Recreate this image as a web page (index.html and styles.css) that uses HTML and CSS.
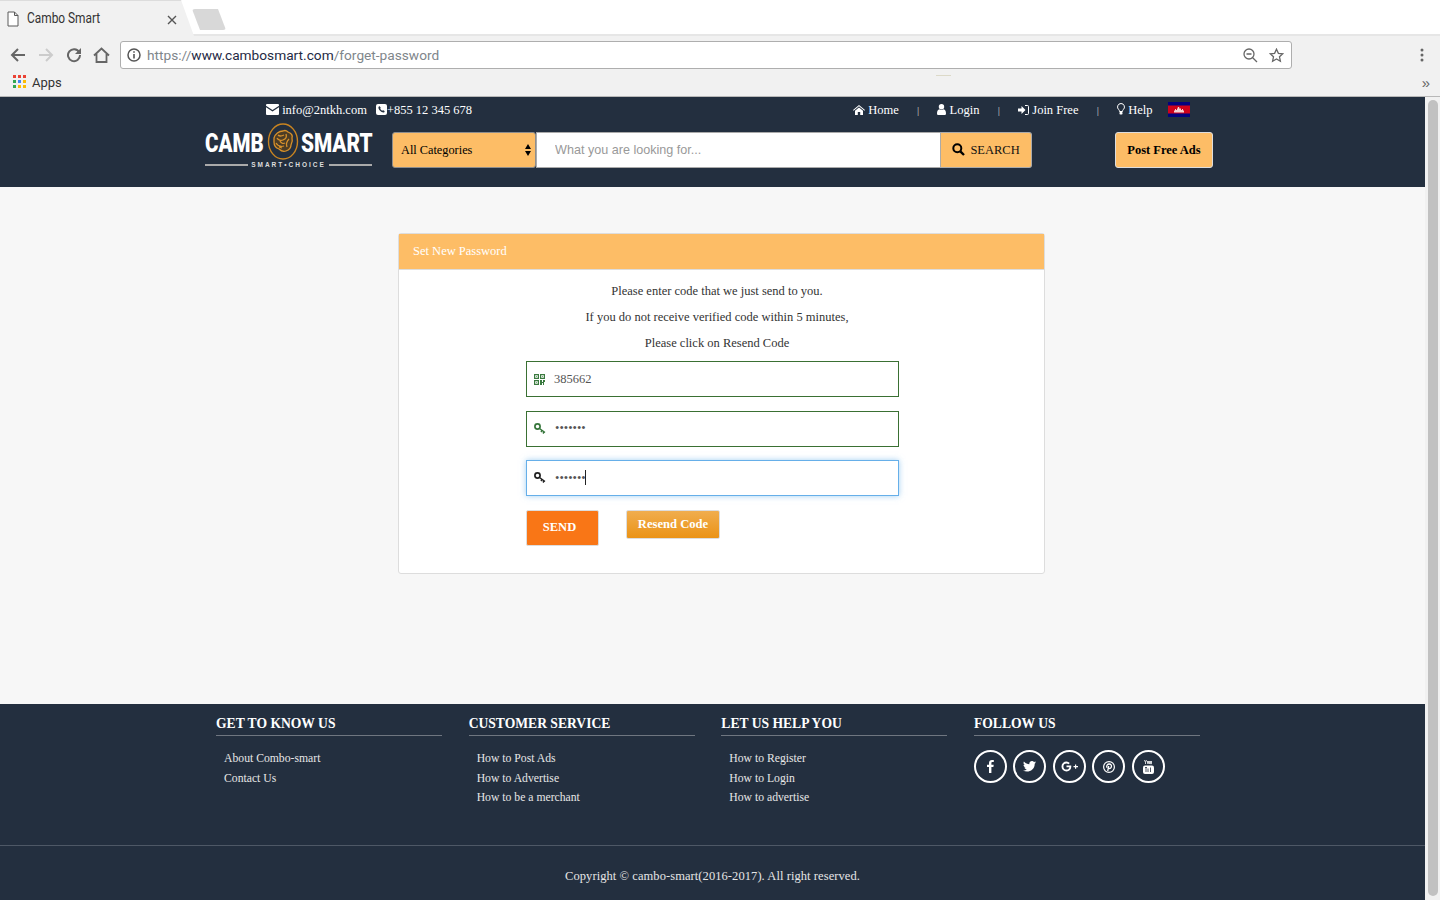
FILE: index.html
```html
<!DOCTYPE html>
<html>
<head>
<title>Cambo Smart</title>
<link rel="stylesheet" href="styles.css">
</head>
<body>

<div class="chrome">
  <div class="tabstrip">
    <div class="tab">
      <svg class="tab-doc" width="12" height="16" viewBox="0 0 12 16"><path d="M1 1h6.500L11 4.500V15H1z M7.500 1v3.500H11" fill="#fff" stroke="#5a5a5a"/></svg>
      <span class="tab-title">Cambo Smart</span>
      <svg class="tab-x" width="10" height="10" viewBox="0 0 10 10"><path d="M1 1l8 8M9 1l-8 8" stroke="#555" stroke-width="1.400"/></svg>
    </div>
    <div class="newtab"></div>
  </div>
  <div class="toolbar">
    <svg class="tool-back" width="16" height="16" viewBox="0 0 16 16"><path d="M15 8H2M8 2L2 8l6 6" fill="none" stroke="#666" stroke-width="2"/></svg>
    <svg class="tool-fwd" width="16" height="16" viewBox="0 0 16 16"><path d="M1 8h13M8 2l6 6-6 6" fill="none" stroke="#ccc" stroke-width="2"/></svg>
    <svg class="tool-reload" width="16" height="16" viewBox="0 0 16 16"><path d="M13.200 5.200A6 6 0 1 0 14 8" fill="none" stroke="#666" stroke-width="2"/><path d="M15 1v6H9z" fill="#666"/></svg>
    <svg class="tool-home" width="17" height="16" viewBox="0 0 17 16"><path d="M1 8.500L8.500 1.500 16 8.500M3.500 7v8h10V7" fill="none" stroke="#666" stroke-width="1.800"/></svg>
    <div class="omnibox">
      <svg width="14" height="14" viewBox="0 0 14 14"><circle cx="7" cy="7" r="6" fill="none" stroke="#555" stroke-width="1.500"/><path d="M7 6v4.500M7 3.300v1.500" stroke="#555" stroke-width="1.600"/></svg>
      <span class="url"><span class="url-dim">https://</span>www.cambosmart.com<span class="url-dim">/forget-password</span></span>
      <svg class="omni-zoom" width="15" height="15" viewBox="0 0 15 15"><circle cx="6" cy="6" r="5" fill="none" stroke="#666" stroke-width="1.300"/><path d="M3.500 6h5M9.700 9.700L14 14" stroke="#666" stroke-width="1.300"/></svg>
      <svg width="15" height="15" viewBox="0 0 15 15"><path d="M7.500 1.200l1.900 4.100 4.400.5-3.300 3 .9 4.400-3.900-2.200-3.900 2.200.9-4.400-3.300-3 4.400-.5z" fill="none" stroke="#666" stroke-width="1.300"/></svg>
    </div>
    <svg class="tool-menu" width="4" height="14" viewBox="0 0 4 14"><circle cx="2" cy="2" r="1.500" fill="#666"/><circle cx="2" cy="7" r="1.500" fill="#666"/><circle cx="2" cy="12" r="1.500" fill="#666"/></svg>
  </div>
  <div class="bookmarks">
    <svg width="14" height="14" viewBox="0 0 14 14">
      <rect width="3" height="3" fill="#ea4335"/><rect x="5" width="3" height="3" fill="#ea4335"/><rect x="10" width="3" height="3" fill="#ea4335"/>
      <rect y="5" width="3" height="3" fill="#34a853"/><rect x="5" y="5" width="3" height="3" fill="#4285f4"/><rect x="10" y="5" width="3" height="3" fill="#fbbc05"/>
      <rect y="10" width="3" height="3" fill="#34a853"/><rect x="5" y="10" width="3" height="3" fill="#fbbc05"/><rect x="10" y="10" width="3" height="3" fill="#fbbc05"/>
    </svg>
    <span class="apps">Apps</span>
    <span class="more">»</span>
    <span class="grip"></span>
  </div>
</div>

<div class="viewport">
  <div class="page">
    <header class="site-header">
      <div class="topbar">
        <div class="contact">
          <span class="top-item">
            <svg class="ico" width="13" height="11" viewBox="0 0 13 11"><path d="M1 0h11a1 1 0 0 1 1 1v.8L6.500 6 0 1.800V1a1 1 0 0 1 1-1zM0 3.300l6.500 4.200L13 3.300V10a1 1 0 0 1-1 1H1a1 1 0 0 1-1-1z" fill="#fff"/></svg>
            info@2ntkh.com
          </span>
          <span class="top-item phone">
            <svg class="ico" width="11" height="11" viewBox="0 0 11 11"><rect width="11" height="11" rx="2" fill="#fff"/><path d="M2.500 3c.3-.7 1-.9 1.400-.6l.8 1.300c.1.300-.4.800-.5 1.100.3.800 1 1.500 1.900 1.900.3-.2.700-.7 1.100-.5l1.300.8c.3.400 0 1.200-.6 1.400C5.500 8.800 1.800 5.500 2.500 3z" fill="#232f3f"/></svg>+855 12 345 678
          </span>
        </div>
        <nav class="topnav">
          <a class="nav-link nav-home">
            <svg class="ico" width="12" height="10" viewBox="0 0 12 10"><path d="M6 0l6 5-.6.700L6 1.300.6 5.700 0 5zM2 5.800L6 2.500l4 3.300V10H7.200V7H4.800v3H2z" fill="#fff"/></svg>
            Home
          </a>
          <span class="sep">|</span>
          <a class="nav-link nav-login">
            <svg class="ico" width="9" height="11" viewBox="0 0 9 11"><circle cx="4.500" cy="2.700" r="2.700" fill="#fff"/><path d="M0 9.500C0 7 1 5.500 2.300 5.200c1.300.9 3.100.9 4.400 0C8 5.500 9 7 9 9.500 9 10.500 8.300 11 7.500 11h-6C.7 11 0 10.500 0 9.500z" fill="#fff"/></svg>
            Login
          </a>
          <span class="sep">|</span>
          <a class="nav-link nav-join">
            <svg class="ico" width="11" height="10" viewBox="0 0 11 10"><path d="M0 3.500h3.500V1L7.500 5l-4 4V6.500H0z" fill="#fff"/><path d="M7 .500h2.500a1 1 0 0 1 1 1v7a1 1 0 0 1-1 1H7" fill="none" stroke="#fff"/></svg>
            Join Free
          </a>
          <span class="sep">|</span>
          <a class="nav-link nav-help">
            <svg class="ico" width="8" height="12" viewBox="0 0 8 12"><path d="M4 .500a3.500 3.500 0 0 1 2.200 6.200c-.5.500-.7 1-.7 1.800h-3c0-.8-.2-1.300-.7-1.800A3.500 3.500 0 0 1 4 .500z" fill="none" stroke="#fff"/><rect x="2.500" y="9" width="3" height="2.500" rx=".8" fill="#fff"/></svg>
            Help
          </a>
          <svg class="flag" width="22" height="15" viewBox="0 0 22 15"><rect width="22" height="15" fill="#03037f"/><rect y="3.500" width="22" height="8" fill="#d0021b"/><path d="M6 10.500V9l1-1V7h1v1h1V6.500h.800V5h1.400v1.500H13V8h1V7h1v1l1 1v1.500z" fill="#f4d5d5"/></svg>
        </nav>
      </div>
      <div class="searchbar">
        <a class="logo">
          <div class="logo-main">
            <span class="logo-word logo-camb">CAMB</span>
            <svg class="logo-mark" width="32" height="37" viewBox="0 0 32 37">
              <ellipse cx="16" cy="18.500" rx="14.500" ry="17.500" fill="none" stroke="#c98420" stroke-width="1.400"/>
              <path d="M7 15c1-4 5-7 9-7 2-1 4 0 5 1 3 1 5 3 4 6 1 3 0 5-1 7 0 3-2 5-5 6-3 1-5 0-7-2-3-1-5-4-5-7zM11 12c2 2 4 1 6 0M19 11c1 3 0 5-3 6-2 1-5 0-6-2M22 16c-2 2-3 5-2 8M9 20c2 3 5 4 8 3M13 18c1 2 3 3 5 2M15 25l-3-1" fill="#4d3d25" stroke="#d8912a" stroke-width="1.300"/>
            </svg>
            <span class="logo-word logo-smart">SMART</span>
          </div>
          <div class="logo-tag"><i></i><span>SMART•CHOICE</span><i></i></div>
        </a>
        <form class="search">
          <div class="select-wrap">
            <select class="category"><option>All Categories</option></select>
            <svg class="select-arrows" width="6" height="12" viewBox="0 0 6 12"><path d="M3 0l3 5H0zM3 12L0 7h6z" fill="#000"/></svg>
          </div>
          <input class="search-input" type="text" placeholder="What you are looking for...">
          <button class="search-btn" type="button">
            <svg width="13" height="13" viewBox="0 0 13 13"><circle cx="5.300" cy="5.300" r="4" fill="none" stroke="#000" stroke-width="2"/><path d="M8.300 8.300L12 12" stroke="#000" stroke-width="2.400"/></svg>
            SEARCH
          </button>
        </form>
        <a class="post-btn">Post Free Ads</a>
      </div>
    </header>

    <main class="content">
      <div class="panel">
        <div class="panel-heading">Set New Password</div>
        <div class="panel-body">
          <p class="note">Please enter code that we just send to you.</p>
          <p class="note">If you do not receive verified code within 5 minutes,</p>
          <p class="note">Please click on Resend Code</p>
          <div class="field valid">
            <svg class="field-ico" width="11" height="11" viewBox="0 0 11 11"><path d="M0 0h5v5H0zM1.200 1.200v2.600h2.600V1.200zM6 0h5v5H6zM7.200 1.200v2.600h2.600V1.200zM0 6h5v5H0zM1.200 7.200v2.600h2.600V7.200zM6 6h2v2h1V6h2v2h-1v3H9V9H8v2H6z" fill="#3a7a3f" fill-rule="evenodd"/><path d="M2 2h1v1H2zM8 2h1v1H8zM2 8h1v1H2z" fill="#7fae82"/></svg>
            <input type="text" value="385662">
          </div>
          <div class="field valid">
            <svg class="field-ico" width="12" height="12" viewBox="0 0 12 12"><circle cx="3.500" cy="3.500" r="2.600" fill="none" stroke="#37763c" stroke-width="1.700"/><path d="M5.500 5.500L11 9.500M8 7.500l-1 1.500M10 9l-1 1.500" fill="none" stroke="#37763c" stroke-width="1.500"/></svg>
            <input type="password" value="1234567">
          </div>
          <div class="field focus">
            <svg class="field-ico" width="12" height="12" viewBox="0 0 12 12"><circle cx="3.500" cy="3.500" r="2.600" fill="none" stroke="#222" stroke-width="1.700"/><path d="M5.500 5.500L11 9.500M8 7.500l-1 1.500M10 9l-1 1.500" fill="none" stroke="#222" stroke-width="1.500"/></svg>
            <input type="password" value="1234567">
            <span class="caret"></span>
          </div>
          <div class="actions">
            <button class="send-btn" type="button">SEND</button>
            <button class="resend-btn" type="button">Resend Code</button>
          </div>
        </div>
      </div>
    </main>

    <footer class="site-footer">
      <div class="footer-cols">
        <div class="footer-col">
          <h4>GET TO KNOW US</h4>
          <ul>
            <li>About Combo-smart</li>
            <li>Contact Us</li>
          </ul>
        </div>
        <div class="footer-col">
          <h4>CUSTOMER SERVICE</h4>
          <ul>
            <li>How to Post Ads</li>
            <li>How to Advertise</li>
            <li>How to be a merchant</li>
          </ul>
        </div>
        <div class="footer-col">
          <h4>LET US HELP YOU</h4>
          <ul>
            <li>How to Register</li>
            <li>How to Login</li>
            <li>How to advertise</li>
          </ul>
        </div>
        <div class="footer-col">
          <h4>FOLLOW US</h4>
          <div class="social">
            <a class="social-btn"><svg width="7" height="13" viewBox="0 0 7 13"><path d="M2 13V7H0V4.700h2V3c0-2 1.200-3 3-3 .8 0 1.500.1 1.800.1v2H5.600C4.600 2.100 4.400 2.600 4.400 3.300v1.400h2.300L6.400 7h-2v6z" fill="#fff"/></svg></a>
            <a class="social-btn"><svg width="13" height="11" viewBox="0 0 13 11"><path d="M13 1.300c-.5.200-1 .4-1.500.4.600-.3 1-.8 1.200-1.500-.5.300-1.100.5-1.700.7A2.700 2.700 0 0 0 6.400 3.300C4.200 3.200 2.200 2.100.9.500.2 1.700.6 3.300 1.700 4c-.4 0-.8-.1-1.200-.3 0 1.300.9 2.400 2.100 2.700-.4.100-.8.100-1.200 0 .3 1.100 1.300 1.800 2.500 1.900C2.800 9.200 1.400 9.700 0 9.500 4.500 12.300 12 9.800 11.700 2.700c.5-.4 1-.9 1.300-1.400z" fill="#fff"/></svg></a>
            <a class="social-btn gplus"><svg width="17" height="11" viewBox="0 0 17 11"><path d="M5.500 4.600v1.700h2.900C8.100 7.700 7 8.600 5.500 8.600a3.100 3.100 0 0 1 0-6.200c.8 0 1.500.3 2 .8l1.300-1.300A5 5 0 0 0 5.500.5a5 5 0 0 0 0 10c2.900 0 4.800-2 4.800-4.900 0-.3 0-.7-.1-1z" fill="#fff"/><path d="M14 3.500v1.500h-1.500V6.200H14v1.500h1.200V6.200H17V5h-1.800V3.500z" fill="#fff"/></svg></a>
            <a class="social-btn"><svg width="12" height="12" viewBox="0 0 12 12"><circle cx="6" cy="6" r="5.400" fill="none" stroke="#fff" stroke-width="1.200"/><path d="M4.700 10l1-5M4 6.700C3 4.700 4.500 3 6.200 3c1.700 0 2.500 1.200 2.200 2.700-.3 1.500-1.500 2.300-2.600 1.500" fill="none" stroke="#fff" stroke-width="1.300"/></svg></a>
            <a class="social-btn"><svg width="11" height="14" viewBox="0 0 11 14"><path d="M1.500 0l1 2.500L3.500 0M2.500 2.500V4M4.500 1v2.500h1V1M6.500 1v3M7.500 1v2.800h1V1" fill="none" stroke="#fff" stroke-width=".8"/><rect y="5.500" width="11" height="8.500" rx="2" fill="#fff"/><path d="M2 7.500h2M3 7.500V12M5 8.500v3.500M7.500 7.500V12" stroke="#232f3f" stroke-width=".8"/></svg></a>
          </div>
        </div>
      </div>
      <div class="copyright">Copyright © cambo-smart(2016-2017). All right reserved.</div>
    </footer>
  </div>
  <div class="scrollbar"><div class="thumb"></div></div>
</div>

</body>
</html>
```

FILE: styles.css
```css
* {
  box-sizing: border-box;
}
html,
body {
  margin: 0;
  height: 100%;
  overflow: hidden;
}
body {
  font-family: "Liberation Serif", serif;
  font-size: 12.500px;
  background: #fff;
}

/* browser chrome */
.chrome {
  height: 97px;
  background: #f1f1f1;
  border-bottom: 1px solid #b8b8b8;
  font-family: "Liberation Sans", sans-serif;
}
.tabstrip {
  height: 36px;
  display: flex;
  background: #fff;
  border-bottom: 2px solid #e6e6e6;
}
.tab {
  width: 194px;
  height: 36px;
  background: #f1f1f1;
  border-top: 1px solid #dcdcdc;
  clip-path: polygon(0 0, 181px 0, 194px 100%, 0 100%);
  display: flex;
  align-items: center;
  padding-left: 7px;
  position: relative;
  z-index: 1;
}
.tab-title {
  font-family: "Roboto", sans-serif;
  font-size: 14.500px;
  color: #333;
  margin-left: 8px;
  transform-origin: left;
  transform: scaleX(0.82);
  white-space: nowrap;
}
.tab-x {
  position: absolute;
  left: 167px;
  top: 14px;
}
.newtab {
  width: 34px;
  height: 21px;
  margin: 9px 0 0 -2px;
  background: #d8d8d8;
  border-radius: 3px;
  clip-path: polygon(0 0, 26px 0, 34px 100%, 8px 100%);
}
.toolbar {
  height: 38px;
  display: flex;
  align-items: center;
  padding-left: 10px;
  position: relative;
}
.tool-fwd {
  margin-left: 12px;
}
.tool-reload {
  margin-left: 12px;
}
.tool-home {
  margin-left: 11px;
}
.omnibox {
  width: 1172px;
  height: 28px;
  margin-left: 10px;
  background: #fff;
  border: 1px solid #aeaeae;
  border-radius: 3px;
  display: flex;
  align-items: center;
  gap: 11px;
  padding: 0 7px 0 6px;
}
.url {
  flex: 1;
  font-family: "Roboto", sans-serif;
  font-size: 13.700px;
  color: #1f2a44;
  margin-left: -5px;
}
.url-dim {
  color: #80868b;
}
.tool-menu {
  margin-left: 128px;
}
.bookmarks {
  height: 22px;
  display: flex;
  align-items: center;
  padding: 0 0 6px 13px;
  position: relative;
}
.apps {
  font-family: "Roboto", sans-serif;
  font-size: 13px;
  color: #333;
  margin-left: 5px;
}
.more {
  margin-left: auto;
  margin-right: 10px;
  font-size: 15px;
  color: #666;
}
.grip {
  position: absolute;
  left: 936px;
  top: 1px;
  width: 15px;
  height: 1px;
  background: #dcd9c8;
}

/* page */
.viewport {
  height: 803px;
  display: flex;
  overflow: hidden;
}
.page {
  width: 1425px;
  flex: none;
}
.scrollbar {
  flex: 1;
  background: #f1f1f1;
  padding: 3px 2px 0 3px;
}
.thumb {
  height: 796px;
  background: #c1c1c1;
  border-radius: 5px;
}

/* header */
.site-header {
  height: 90px;
  background: #232f3f;
  color: #fff;
}
.topbar {
  height: 35px;
  display: flex;
  padding: 5px 0 0 266px;
  line-height: 16px;
}
.contact {
  display: flex;
  gap: 9px;
}
.top-item {
  white-space: nowrap;
}
.ico {
  vertical-align: -1px;
}
.topnav {
  display: flex;
  margin-left: 381px;
}
.nav-link {
  white-space: nowrap;
}
.sep {
  margin: 0 18.250px;
  color: #ccc;
  font-size: 11px;
}
.flag {
  margin-left: 15px;
}
.searchbar {
  display: flex;
  padding-left: 205px;
}
.logo {
  width: 167px;
  display: block;
  margin-top: -9px;
}
.logo-main {
  display: flex;
  align-items: center;
  height: 37px;
  font-family: "Roboto", sans-serif;
  font-weight: 900;
  font-size: 25px;
  color: #fff;
}
.logo-word {
  display: inline-block;
  margin-top: 4px;
  transform-origin: left;
  white-space: nowrap;
}
.logo-camb {
  width: 62px;
  transform: scaleX(0.82);
}
.logo-smart {
  width: 72px;
  transform: scaleX(0.83);
}
.logo-mark {
  flex: none;
  margin-right: 2px;
}
.logo-tag {
  display: flex;
  align-items: center;
  gap: 3px;
  font-family: "Liberation Sans", sans-serif;
  font-weight: 700;
  font-size: 6.500px;
  letter-spacing: 2px;
  color: #ddd;
  height: 9px;
  white-space: nowrap;
}
.logo-tag i {
  flex: 1;
  height: 2px;
  background: #aaa;
}
.search {
  display: flex;
  margin-left: 20px;
  height: 36px;
}
.select-wrap {
  position: relative;
  width: 144px;
}
.category {
  appearance: none;
  width: 100%;
  height: 36px;
  background: #fdbd66;
  border: 1px solid #8d8d8d;
  border-radius: 3px;
  padding: 0 8px;
  font-family: "Liberation Serif", serif;
  font-size: 12.300px;
  color: #000;
}
.select-arrows {
  position: absolute;
  right: 5px;
  top: 12px;
}
.search-input {
  width: 405px;
  height: 36px;
  border: 1px solid #aaa;
  padding: 0 18px;
  font-family: "Liberation Sans", sans-serif;
  font-size: 12.600px;
  outline: none;
}
.search-input::placeholder {
  color: #999;
}
.search-btn {
  width: 91px;
  height: 36px;
  margin: 0;
  padding: 0;
  background: #fdbd66;
  border: 1px solid #aaa;
  border-left: 0;
  border-radius: 0 3px 3px 0;
  font-family: "Liberation Serif", serif;
  font-size: 12.500px;
  color: #111;
}
.search-btn svg {
  vertical-align: -2px;
  margin-right: 2px;
}
.post-btn {
  width: 98px;
  height: 36px;
  margin-left: 83px;
  background: #fdbd66;
  border: 1px solid #ddd;
  border-radius: 3px;
  font-weight: 700;
  color: #000;
  display: flex;
  align-items: center;
  justify-content: center;
  white-space: nowrap;
}

/* form card */
.content {
  height: 517px;
  background: #f7f7f7;
  padding: 46px 0 0 398px;
}
.panel {
  width: 647px;
  height: 341px;
  background: #fff;
  border: 1px solid #ddd;
  border-radius: 3px;
}
.panel-heading {
  height: 36px;
  background: #fdbd66;
  border-bottom: 1px solid #ddd;
  padding-left: 14px;
  line-height: 34px;
  color: #fff;
}
.panel-body {
  padding: 8px 127px 0;
}
.note {
  margin: 0 0 10px -9px;
  height: 16px;
  line-height: 26px;
  text-align: center;
  color: #333;
}
.field {
  width: 373px;
  height: 36px;
  display: flex;
  align-items: center;
  gap: 9px;
  padding-left: 7px;
  border: 1px solid #3a7033;
  margin-bottom: 13.500px;
  background: #fff;
  position: relative;
}
.note + .field {
  margin-top: 15px;
}
.field.focus {
  border-color: #66afe9;
  box-shadow: 0 0 6px rgba(102, 175, 233, 0.6);
}
.field input {
  flex: 1;
  min-width: 0;
  border: 0;
  outline: none;
  padding: 0;
  background: transparent;
  font-family: "Liberation Serif", serif;
  font-size: 12.500px;
  color: #555;
}
.caret {
  position: absolute;
  left: 58px;
  top: 9px;
  width: 1px;
  height: 15px;
  background: #222;
}
.actions {
  display: flex;
  align-items: flex-start;
}
.send-btn {
  width: 73px;
  height: 36px;
  background: #f97616;
  border: 1px solid #ddd;
  border-radius: 2px;
  font-family: "Liberation Serif", serif;
  font-size: 12.500px;
  font-weight: 700;
  color: #fff;
  padding: 0 6px 0 0;
}
.resend-btn {
  width: 94px;
  height: 29px;
  margin-left: 27px;
  background: linear-gradient(#f0ad4e, #eb9316);
  border: 1px solid #ddd;
  border-radius: 2px;
  font-family: "Liberation Serif", serif;
  font-size: 12.600px;
  font-weight: 700;
  color: #fff;
  padding: 0;
}

/* footer */
.site-footer {
  height: 196px;
  background: #232f3f;
  color: #fff;
}
.footer-cols {
  height: 142px;
  display: grid;
  grid-template-columns: repeat(4, 226px);
  column-gap: 26.670px;
  padding: 12px 0 0 216px;
  border-bottom: 1px solid #4e5866;
}
.footer-col h4 {
  margin: 0;
  height: 20px;
  line-height: 15px;
  font-size: 13.600px;
  font-weight: 700;
  border-bottom: 1px solid #6f7680;
}
.footer-col ul {
  list-style: none;
  margin: 13px 0 0;
  padding: 0 0 0 8px;
  font-size: 11.700px;
  line-height: 19.500px;
  color: #e6e6e6;
}
.social {
  display: flex;
  gap: 6.500px;
  margin-top: 14px;
}
.social-btn {
  width: 33px;
  height: 33px;
  border: 2px solid #fff;
  border-radius: 50%;
  display: flex;
  align-items: center;
  justify-content: center;
}
.copyright {
  text-align: center;
  padding-top: 22px;
  line-height: 16px;
  letter-spacing: 0.070px;
  color: #e6e6e6;
}
```
